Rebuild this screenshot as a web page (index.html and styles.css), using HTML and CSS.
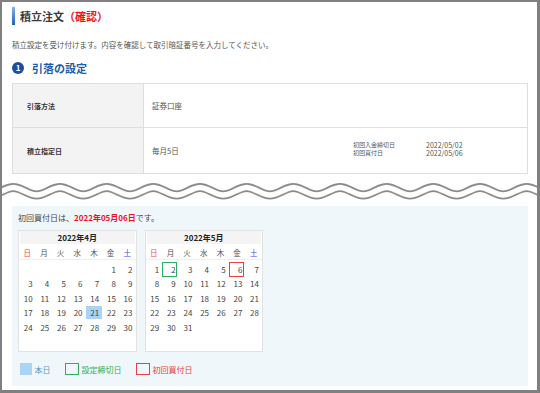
FILE: index.html
```html
<!DOCTYPE html>
<html lang="ja">
<head>
    <meta charset="utf-8">
    <title>積立注文（確認）</title>
    <link rel="stylesheet" href="styles.css">
</head>
<body>
    <div class="page">
        <!-- Title -->
        <div class="title">
            <span class="title-bar"></span>
            <h1>積立注文<span class="confirm">（確認）</span></h1>
        </div>
        <p class="lead">積立設定を受け付けます。内容を確認して取引暗証番号を入力してください。</p>

        <!-- Section 1 -->
        <h2 class="section"><span class="step">1</span>引落の設定</h2>
        <div class="sheet">
            <div class="sheet-label">引落方法</div>
            <div class="sheet-value">証券口座</div>
            <div class="sheet-label">積立指定日</div>
            <div class="sheet-value split">
                <span>毎月5日</span>
                <dl class="dates">
                    <dt>初回入金締切日</dt><dd>2022/05/02</dd>
                    <dt>初回買付日</dt><dd>2022/05/06</dd>
                </dl>
            </div>
        </div>

        <!-- Wave divider -->
        <svg class="wave" width="535" height="20" viewBox="0 0 535 20">
            <defs>
                <pattern id="wave-tile" x="11.3" y="0" width="46.67" height="20" patternUnits="userSpaceOnUse">
                    <path d="M0,6.5 C8.5,6.5 14.8,14 23.33,14 C31.9,14 38.2,6.5 46.67,6.5" fill="none" stroke="#8a8a8a" stroke-width="9"/>
                    <path d="M-1,6.5 C8.5,6.5 14.8,14 23.33,14 C31.9,14 38.2,6.5 47.67,6.5" fill="none" stroke="#ffffff" stroke-width="5.4"/>
                </pattern>
            </defs>
            <rect x="0" y="0" width="535" height="20" fill="url(#wave-tile)"/>
        </svg>

        <!-- Calendar panel -->
        <div class="panel">
            <p class="panel-text">初回買付日は、<strong>2022年05月06日</strong>です。</p>
            <div class="cals">
                <div class="cal">
                    <div class="cal-head">2022年4月</div>
                    <div class="cal-week">
                        <span class="sun">日</span><span>月</span><span>火</span><span>水</span><span>木</span><span>金</span><span class="sat">土</span>
                    </div>
                    <div class="cal-days">
                        <span></span><span></span><span></span><span></span><span></span><span>1</span><span>2</span>
                        <span>3</span><span>4</span><span>5</span><span>6</span><span>7</span><span>8</span><span>9</span>
                        <span>10</span><span>11</span><span>12</span><span>13</span><span>14</span><span>15</span><span>16</span>
                        <span>17</span><span>18</span><span>19</span><span>20</span><span class="today">21</span><span>22</span><span>23</span>
                        <span>24</span><span>25</span><span>26</span><span>27</span><span>28</span><span>29</span><span>30</span>
                    </div>
                </div>
                <div class="cal">
                    <div class="cal-head">2022年5月</div>
                    <div class="cal-week">
                        <span class="sun">日</span><span>月</span><span>火</span><span>水</span><span>木</span><span>金</span><span class="sat">土</span>
                    </div>
                    <div class="cal-days">
                        <span>1</span><span class="mark deadline">2</span><span>3</span><span>4</span><span>5</span><span class="mark buy">6</span><span>7</span>
                        <span>8</span><span>9</span><span>10</span><span>11</span><span>12</span><span>13</span><span>14</span>
                        <span>15</span><span>16</span><span>17</span><span>18</span><span>19</span><span>20</span><span>21</span>
                        <span>22</span><span>23</span><span>24</span><span>25</span><span>26</span><span>27</span><span>28</span>
                        <span>29</span><span>30</span><span>31</span>
                    </div>
                </div>
            </div>

            <!-- Legend -->
            <ul class="legend">
                <li class="key-today"><i></i>本日</li>
                <li class="key-deadline"><i></i>設定締切日</li>
                <li class="key-buy"><i></i>初回買付日</li>
            </ul>
        </div>
    </div>
</body>
</html>
```

FILE: styles.css
```css
:root {
    --frame:      #808080;
    --ink:        #444444;
    --red:        #e8141e;
    --navy:       #1d4f9c;
    --line:       #dedede;
    --pale-grey:  #f3f3f3;
    --pale-blue:  #f0f7fa;
    --today:      #a9d4f6;
    --green:      #2fae5c;
    --alert:      #e84040;
}

* {
    box-sizing: border-box;
}

html, body {
    margin: 0;
    padding: 0;
}

body {
    width: 540px;
    height: 393px;
    overflow: hidden;

    background: #ffffff;
    border: 2px solid var( --frame );
    border-right-width: 3px;
    border-bottom-width: 3px;

    color: var( --ink );
    font-family: "Noto Sans CJK JP", "Noto Sans", sans-serif;
}

.page {
    padding: 5px 9px 0 10px;
}

/* Title */
.title {
    display: flex;
    align-items: center;
    gap: 5px;
    height: 18px;
}

.title-bar {
    width: 3px;
    height: 18px;
    background: linear-gradient( #7fb6e6, #1f62b4 );
}

h1 {
    margin: 0;
    font-size: 11px;
    font-weight: bold;
    line-height: 18px;
    color: #3a3a3a;
}

.confirm {
    color: var( --red );
}

.lead {
    margin: 15px 0 0;
    font-size: 7.5px;
    line-height: 10px;
    color: #555555;
}

/* Section heading */
.section {
    display: flex;
    align-items: center;
    gap: 8px;

    margin: 11px 0 0;
    height: 14px;

    font-size: 11px;
    font-weight: bold;
    color: #1f5cab;
}

.step {
    display: flex;
    align-items: center;
    justify-content: center;

    width: 12px;
    height: 12px;
    border-radius: 50%;

    background: var( --navy );
    color: #ffffff;
    font-size: 8px;
    line-height: 1;
}

/* Settings sheet */
.sheet {
    display: grid;
    grid-template-columns: 131px 1fr;
    grid-template-rows: 43px 46px;

    margin-top: 8px;
    border: 1px solid var( --line );
}

.sheet-label,
.sheet-value {
    display: flex;
    align-items: center;
}

.sheet-label {
    padding-left: 14px;
    background: var( --pale-grey );
    border-right: 1px solid var( --line );

    font-size: 7px;
    font-weight: bold;
    color: #333333;
}

.sheet-value {
    padding-left: 8px;
    font-size: 7.5px;
    color: #555555;
}

.sheet-label:nth-child(3),
.sheet-value:nth-child(4) {
    border-top: 1px solid var( --line );
}

.split {
    justify-content: space-between;
    padding-right: 13px;
}

.dates {
    display: grid;
    grid-template-columns: 73px 88px;
    margin: 0;
    padding-bottom: 3px;

    font-size: 7px;
    line-height: 8.5px;
}

.dates dt {
    font-size: 6px;
}

.dates dd {
    margin: 0;
}

/* Wave */
.wave {
    display: block;
    margin: 7px -9px 0 -10px;
}

/* Calendar panel */
.panel {
    margin-top: 5px;
    height: 180px;
    padding: 6px 6px 0;
    background: var( --pale-blue );
}

.panel-text {
    margin: 0;
    font-size: 8px;
    line-height: 12px;
    color: #444444;
}

.panel-text strong {
    color: var( --red );
}

.cals {
    display: flex;
    gap: 8px;
    margin-top: 6px;
}

.cal {
    width: 118.5px;
    height: 122px;
    background: #ffffff;
    border: 1px solid #e2e2e2;
}

.cal-head {
    margin: 0 1px;
    height: 13px;
    background: #f4f4f4;

    font-size: 8px;
    font-weight: bold;
    line-height: 13px;
    text-align: center;
    color: #222222;
}

.cal-week,
.cal-days {
    display: grid;
    grid-template-columns: repeat( 7, 1fr );
}

.cal-week {
    margin-top: 2px;
    height: 14px;
    border-bottom: 1px solid #eeeeee;

    font-size: 7.5px;
    line-height: 13px;
    text-align: center;
    color: #555555;
}

.sun {
    color: #ee4b4b;
}

.sat {
    color: #4646ee;
}

.cal-days {
    row-gap: 1.67px;
    padding-top: 2.5px;

    font-size: 8px;
    line-height: 13px;
    color: #444444;
}

.cal-days span {
    position: relative;
    height: 13px;
    padding-right: 3px;
    text-align: right;
}

.cal-days .today {
    background: var( --today );
}

.mark::after {
    content: "";
    position: absolute;
    top: -1px;
    bottom: -1.5px;
    left: 0;
    right: 1.5px;
    border: 1.5px solid;
}

.deadline::after {
    border-color: var( --green );
}

.buy::after {
    border-color: var( --alert );
}

/* Legend */
.legend {
    display: flex;
    gap: 14px;

    margin: 10.5px 0 0 2px;
    padding: 0;
    list-style: none;

    font-size: 8px;
    line-height: 13px;
}

.legend li {
    display: flex;
    align-items: center;
    gap: 2.5px;
}

.legend i {
    display: block;
    height: 12.5px;
}

.key-today {
    color: #5f95cf;
}

.key-today i {
    width: 12px;
    background: var( --today );
}

.key-deadline {
    color: var( --green );
}

.key-deadline i {
    width: 14.5px;
    border: 1.5px solid var( --green );
}

.key-buy {
    color: var( --alert );
}

.key-buy i {
    width: 14.5px;
    border: 1.5px solid var( --alert );
}
```
